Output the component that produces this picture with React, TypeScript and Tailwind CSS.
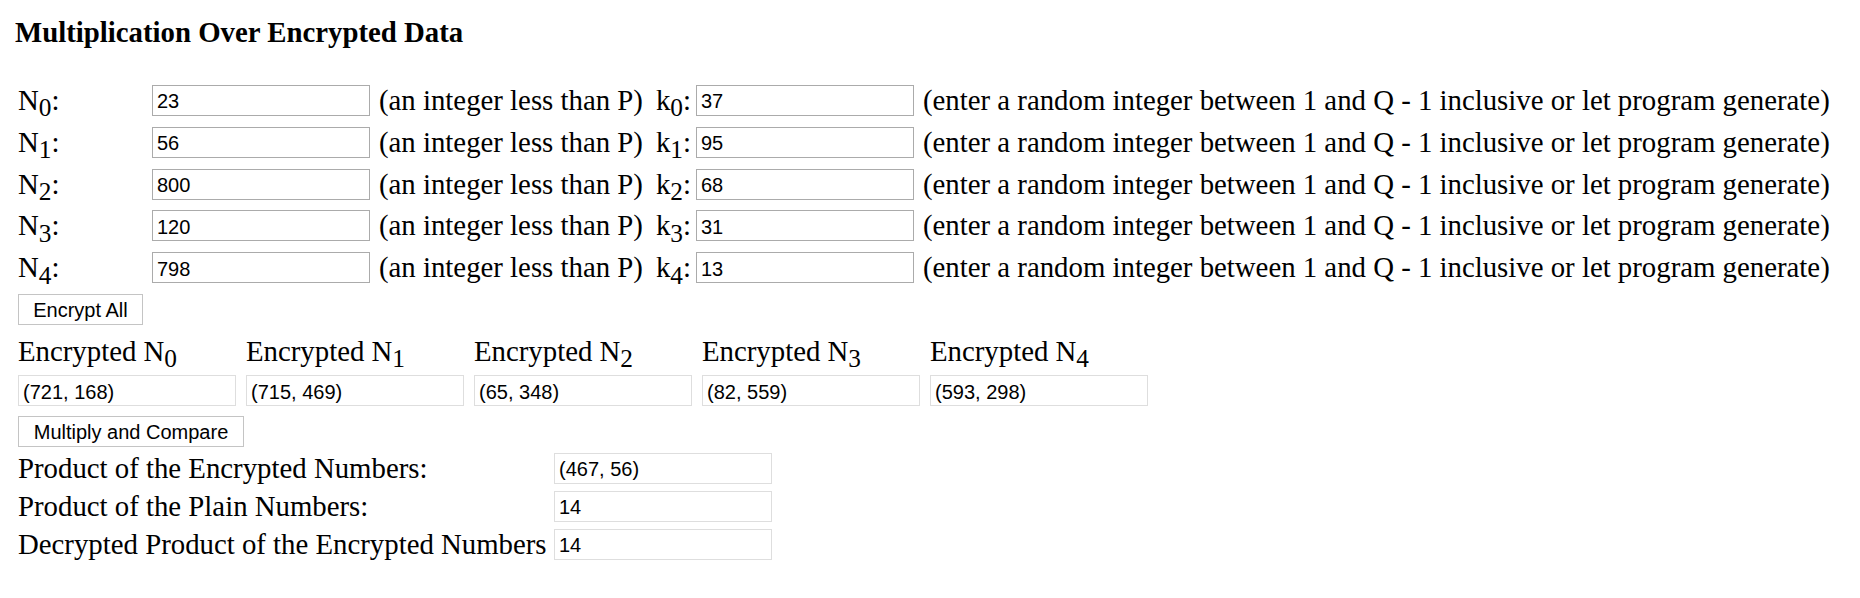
import React from 'react';

const plainNumbers = ['23', '56', '800', '120', '798'];
const randomKs = ['37', '95', '68', '31', '13'];
const encrypted = ['(721, 168)', '(715, 469)', '(65, 348)', '(82, 559)', '(593, 298)'];

const inputBase =
  "w-[218px] h-[31px] bg-white pl-[4px] pt-[3px] text-[20px] text-black outline-none font-['Liberation_Sans',Arial,sans-serif]";

function Sub({ n }: { n: number }) {
  return <sub className="text-[0.88em] bottom-[-0.25em]">{n}</sub>;
}

export default function App() {
  return (
    <div className="min-h-screen bg-white text-black text-[28.8px] font-['Liberation_Serif','Times_New_Roman',serif]">
      <div className="pl-[18px] pt-[16px]">
        <h4 className="-ml-[3px] h-[32px] leading-[32px] font-bold">Multiplication Over Encrypted Data</h4>

        {/* plain numbers and their k values */}
        <div className="mt-[31.6px]">
          {plainNumbers.map((n, i) => (
            <div key={i} className="flex h-[41.8px] items-center whitespace-nowrap">
              <div className="w-[134px] leading-[33px]">
                N<Sub n={i} />:
              </div>
              <input readOnly value={n} className={`${inputBase} border border-[#ababab]`} />
              <span className="ml-[9px] leading-[33px]">(an integer less than P)</span>
              <span className="ml-[13px] leading-[33px]">
                k<Sub n={i} />:
              </span>
              <input readOnly value={randomKs[i]} className={`${inputBase} ml-[5px] border border-[#ababab]`} />
              <span className="ml-[9px] leading-[33px]">
                (enter a random integer between 1 and Q - 1 inclusive or let program generate)
              </span>
            </div>
          ))}
        </div>

        <button className="mt-[5.4px] block h-[31px] w-[125px] border border-[#c4c4c4] bg-white text-[20px] text-black font-['Liberation_Sans',Arial,sans-serif]">
          Encrypt All
        </button>

        {/* encrypted values */}
        <div className="mt-[8px] flex gap-[10px]">
          {encrypted.map((_, i) => (
            <div key={i} className="h-[36px] w-[218px] leading-[36px] whitespace-nowrap">
              Encrypted N<Sub n={i} />
            </div>
          ))}
        </div>
        <div className="mt-[6.5px] flex gap-[10px]">
          {encrypted.map((v, i) => (
            <input key={i} readOnly value={v} className={`${inputBase} border border-[#dedede]`} />
          ))}
        </div>

        <button className="mt-[9.5px] block h-[31px] w-[226px] border border-[#c4c4c4] bg-white text-[20px] text-black font-['Liberation_Sans',Arial,sans-serif]">
          Multiply and Compare
        </button>

        {/* results */}
        <div className="mt-[2.5px]">
          {[
            ['Product of the Encrypted Numbers:', '(467, 56)'],
            ['Product of the Plain Numbers:', '14'],
            ['Decrypted Product of the Encrypted Numbers', '14'],
          ].map(([label, value]) => (
            <div key={label} className="flex h-[38px] items-center whitespace-nowrap">
              <div className="w-[536px] leading-[33px]">{label}</div>
              <input readOnly value={value} className={`${inputBase} w-[217px] border border-[#dedede]`} />
            </div>
          ))}
        </div>
      </div>
    </div>
  );
}
